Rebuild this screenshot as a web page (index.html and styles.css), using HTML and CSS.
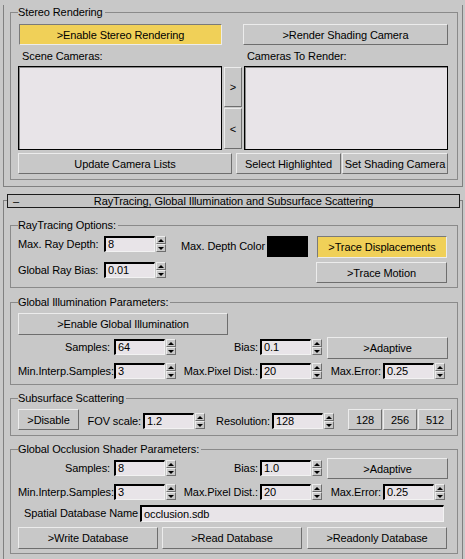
FILE: index.html
```html
<!DOCTYPE html>
<html lang="en">
<head>
    <meta charset="UTF-8">
    <meta name="viewport" content="width=device-width, initial-scale=1.0">
    <title>Renderer Settings</title>
    <link rel="stylesheet" href="styles.css">
</head>
<body>

    <div class="rollout rollout-first">
        <fieldset class="group stereo">
            <legend>Stereo Rendering</legend>
            <div class="row stereo-top">
                <button class="btn btn-on btn-stereo">&gt;Enable Stereo Rendering</button>
                <button class="btn btn-shading">&gt;Render Shading Camera</button>
            </div>
            <div class="row list-labels">
                <span class="list-label first">Scene Cameras:</span>
                <span class="list-label">Cameras To Render:</span>
            </div>
            <div class="row lists">
                <div class="listbox"></div>
                <div class="move-btns">
                    <button class="btn btn-add">&gt;</button>
                    <button class="btn btn-remove">&lt;</button>
                </div>
                <div class="listbox"></div>
            </div>
            <div class="row stereo-bottom">
                <button class="btn btn-update">Update Camera Lists</button>
                <button class="btn btn-select">Select Highlighted</button>
                <button class="btn btn-set">Set Shading Camera</button>
            </div>
        </fieldset>
    </div>

    <div class="rollout rollout-second">
        <div class="rollout-title">
            <span class="toggle">–</span>
            <span class="title-text">RayTracing, Global Illumination and Subsurface Scattering</span>
            <span></span>
        </div>

        <fieldset class="group raytrace">
            <legend>RayTracing Options:</legend>
            <div class="row rt-row1">
                <span class="lbl rt-lbl">Max. Ray Depth:</span>
                <span class="spinner"><span class="field">8</span><span class="arrows"><span class="arrow up"></span><span class="arrow down"></span></span></span>
                <span class="depth-lbl">Max. Depth Color</span>
                <span class="swatch"></span>
                <button class="btn btn-on btn-displace">&gt;Trace Displacements</button>
            </div>
            <div class="row rt-row2">
                <span class="lbl rt-lbl">Global Ray Bias:</span>
                <span class="spinner"><span class="field">0.01</span><span class="arrows"><span class="arrow up"></span><span class="arrow down"></span></span></span>
                <button class="btn btn-motion">&gt;Trace Motion</button>
            </div>
        </fieldset>

        <fieldset class="group gi">
            <legend>Global Illumination Parameters:</legend>
            <button class="btn btn-gi">&gt;Enable Global Illumination</button>
            <div class="row param-row1">
                <span class="lbl col1">Samples:</span>
                <span class="spinner"><span class="field">64</span><span class="arrows"><span class="arrow up"></span><span class="arrow down"></span></span></span>
                <span class="lbl col2">Bias:</span>
                <span class="spinner"><span class="field">0.1</span><span class="arrows"><span class="arrow up"></span><span class="arrow down"></span></span></span>
                <button class="btn btn-adaptive">&gt;Adaptive</button>
            </div>
            <div class="row param-row2">
                <span class="lbl col1">Min.Interp.Samples:</span>
                <span class="spinner"><span class="field">3</span><span class="arrows"><span class="arrow up"></span><span class="arrow down"></span></span></span>
                <span class="lbl col2">Max.Pixel Dist.:</span>
                <span class="spinner"><span class="field">20</span><span class="arrows"><span class="arrow up"></span><span class="arrow down"></span></span></span>
                <span class="lbl col3">Max.Error:</span>
                <span class="spinner"><span class="field">0.25</span><span class="arrows"><span class="arrow up"></span><span class="arrow down"></span></span></span>
            </div>
        </fieldset>

        <fieldset class="group sss">
            <legend>Subsurface Scattering</legend>
            <div class="row sss-row">
                <button class="btn btn-disable">&gt;Disable</button>
                <span class="lbl fov-lbl">FOV scale:</span>
                <span class="spinner"><span class="field">1.2</span><span class="arrows"><span class="arrow up"></span><span class="arrow down"></span></span></span>
                <span class="lbl res-lbl">Resolution:</span>
                <span class="spinner"><span class="field">128</span><span class="arrows"><span class="arrow up"></span><span class="arrow down"></span></span></span>
                <div class="res-btns">
                    <button class="btn btn-res">128</button>
                    <button class="btn btn-res">256</button>
                    <button class="btn btn-res">512</button>
                </div>
            </div>
        </fieldset>

        <fieldset class="group occlusion">
            <legend>Global Occlusion Shader Parameters:</legend>
            <div class="row param-row1">
                <span class="lbl col1">Samples:</span>
                <span class="spinner"><span class="field">8</span><span class="arrows"><span class="arrow up"></span><span class="arrow down"></span></span></span>
                <span class="lbl col2">Bias:</span>
                <span class="spinner"><span class="field">1.0</span><span class="arrows"><span class="arrow up"></span><span class="arrow down"></span></span></span>
                <button class="btn btn-adaptive">&gt;Adaptive</button>
            </div>
            <div class="row param-row2">
                <span class="lbl col1">Min.Interp.Samples:</span>
                <span class="spinner"><span class="field">3</span><span class="arrows"><span class="arrow up"></span><span class="arrow down"></span></span></span>
                <span class="lbl col2">Max.Pixel Dist.:</span>
                <span class="spinner"><span class="field">20</span><span class="arrows"><span class="arrow up"></span><span class="arrow down"></span></span></span>
                <span class="lbl col3">Max.Error:</span>
                <span class="spinner"><span class="field">0.25</span><span class="arrows"><span class="arrow up"></span><span class="arrow down"></span></span></span>
            </div>
            <div class="row db-row">
                <span class="lbl db-lbl">Spatial Database Name</span>
                <span class="field db-field">occlusion.sdb</span>
            </div>
            <div class="row db-btns">
                <button class="btn btn-db">&gt;Write Database</button>
                <button class="btn btn-db">&gt;Read Database</button>
                <button class="btn btn-db">&gt;Readonly Database</button>
            </div>
        </fieldset>
    </div>

</body>
</html>
```

FILE: styles.css
```css
body {
    margin: 0;
    width: 465px;
    overflow: hidden;
    background-color: #c8c8c8;
    font-family: "Liberation Sans", Arial, sans-serif;
    font-size: 11px;
    letter-spacing: -0.1px;
    color: #000;
}

/* rollout frames */
.rollout {
    margin: 0 2px 0 3px;
    border: 1px solid #808080;
    border-top: none;
}

.rollout-second {
    margin-top: 13px;
    border-top: 1px solid #808080;
    border-bottom: none;
    padding-bottom: 20px;
}

.rollout-title {
    display: grid;
    grid-template-columns: 20px 1fr 20px;
    height: 14px;
    margin: -7px 2px 0 3px;
    box-sizing: border-box;
    border: 1px solid #1c1c1c;
    background-color: #c4c4c4;
    line-height: 12px;
}

.toggle {
    padding-left: 5px;
}

.title-text {
    text-align: center;
    white-space: nowrap;
}

/* group boxes */
.group {
    min-width: 0;
    margin: 0 4px 0 6px;
    padding: 0 8px 0 7px;
    border: 1px solid #8a8a8a;
}

.group legend {
    height: 14px;
    padding: 0 2px 0 0;
    line-height: 14px;
    white-space: nowrap;
}

.stereo {
    margin-top: 5px;
    margin-bottom: 6px;
    padding-bottom: 5px;
}

.raytrace {
    margin-top: 10px;
    padding-bottom: 4px;
}

.gi {
    margin-top: 7px;
    padding-bottom: 5px;
}

.sss {
    margin-top: 6px;
    padding-bottom: 5px;
}

.occlusion {
    margin-top: 6px;
    padding-bottom: 4px;
}

.row {
    display: flex;
    align-items: flex-start;
}

/* buttons */
.btn {
    flex: none;
    box-sizing: border-box;
    height: 21px;
    padding: 0;
    font: inherit;
    letter-spacing: inherit;
    color: #000;
    background-color: #c8c8c8;
    border: 1px solid;
    border-color: #ececec #6e6e6e #6e6e6e #ececec;
    text-align: center;
    white-space: nowrap;
    cursor: pointer;
}

.btn-on {
    background-color: #f0d058;
    border-color: #7a7a7a #ececec #ececec #7a7a7a;
}

/* text fields and spinners */
.field {
    display: block;
    flex: none;
    width: 51px;
    height: 16px;
    box-sizing: border-box;
    padding-left: 2px;
    background-color: #e8e4e8;
    border-style: solid;
    border-width: 2px 1px 1px 2px;
    border-color: #000 #f2f2f2 #f2f2f2 #000;
    line-height: 13px;
    white-space: nowrap;
    overflow: hidden;
}

.spinner {
    display: flex;
    flex: none;
}

.arrows {
    display: flex;
    flex-direction: column;
    width: 10px;
    height: 16px;
    margin-left: 1px;
}

.arrow {
    display: flex;
    align-items: center;
    justify-content: center;
    height: 8px;
    box-sizing: border-box;
    border: 1px solid;
    border-color: #ececec #6e6e6e #6e6e6e #ececec;
}

.arrow.up::after {
    content: "";
    border-left: 3px solid transparent;
    border-right: 3px solid transparent;
    border-bottom: 3px solid #000;
}

.arrow.down::after {
    content: "";
    border-left: 3px solid transparent;
    border-right: 3px solid transparent;
    border-top: 3px solid #000;
}

.lbl {
    flex: none;
    height: 16px;
    box-sizing: border-box;
    line-height: 16px;
    text-align: right;
    white-space: nowrap;
}

/* stereo rendering */
.stereo-top {
    margin-top: 5px;
}

.btn-stereo {
    width: 203px;
    margin-left: 1px;
}

.btn-shading {
    width: 205px;
    margin-left: 21px;
}

.list-labels {
    height: 21px;
    line-height: 22px;
}

.list-label {
    padding-left: 3px;
    white-space: nowrap;
}

.list-label.first {
    width: 226px;
    box-sizing: border-box;
    padding-left: 4px;
}

.listbox {
    flex: none;
    width: 204px;
    height: 84px;
    box-sizing: border-box;
    background-color: #e8e4e8;
    border: 1px solid #000;
    box-shadow: inset 1px 1px 0 #8a8a8a;
}

.move-btns {
    display: flex;
    flex-direction: column;
    width: 18px;
    margin: 0 2px;
}

.btn-add {
    height: 40px;
    margin-top: 1px;
}

.btn-remove {
    height: 41px;
    margin-top: 1px;
}

.stereo-bottom {
    margin-top: 3px;
}

.btn-update {
    width: 214px;
}

.btn-select {
    width: 105px;
    margin-left: 4px;
}

.btn-set {
    width: 106px;
    margin-left: 1px;
}

/* raytracing options */
.rt-row1 {
    margin-top: 4px;
    height: 22px;
}

.rt-row2 {
    margin-top: 4px;
    height: 21px;
}

.rt-lbl {
    width: 86px;
    padding-right: 6px;
}

.depth-lbl {
    flex: none;
    width: 86px;
    margin-left: 15px;
    line-height: 21px;
    white-space: nowrap;
}

.swatch {
    flex: none;
    width: 41px;
    height: 21px;
    background-color: #000;
}

.btn-displace {
    width: 130px;
    height: 22px;
    margin-left: 9px;
}

.btn-motion {
    width: 131px;
    margin-left: 150px;
}

/* parameter rows, shared by GI and occlusion */
.btn-gi {
    display: block;
    width: 210px;
    height: 22px;
    margin-top: 4px;
}

.param-row1 {
    height: 22px;
    margin-top: 2px;
}

.param-row1 .lbl,
.param-row1 .spinner {
    margin-top: 2px;
}

.param-row2 {
    height: 16px;
    margin-top: 4px;
}

.col1 {
    width: 92px;
    margin-right: 4px;
}

.col2 {
    width: 82px;
    margin-right: 2px;
}

.col3 {
    width: 59px;
    margin-right: 2px;
}

.btn-adaptive {
    width: 121px;
    height: 22px;
    margin-left: 5px;
}

.occlusion .param-row1 {
    height: 21px;
}

.occlusion .btn-adaptive {
    height: 21px;
    margin-top: 0;
}

.occlusion .param-row2 {
    margin-top: 5px;
}

/* subsurface scattering */
.sss-row {
    margin-top: 4px;
    height: 21px;
}

.sss-row .lbl,
.sss-row .spinner {
    margin-top: 4px;
}

.btn-disable {
    width: 61px;
}

.fov-lbl {
    width: 62px;
    margin-right: 2px;
}

.res-lbl {
    width: 65px;
    margin-right: 2px;
}

.res-btns {
    display: flex;
    gap: 1px;
    margin-left: 14px;
}

.btn-res {
    width: 34px;
}

/* spatial database */
.db-row {
    margin-top: 5px;
}

.db-lbl {
    width: 122px;
    height: 17px;
    padding-left: 6px;
    line-height: 17px;
    text-align: left;
}

.db-field {
    width: 304px;
    height: 17px;
    line-height: 14px;
}

.db-btns {
    margin-top: 5px;
    gap: 4px;
}

.btn-db {
    width: 140px;
    height: 22px;
}

.btn-db:last-child {
    margin-left: 1px;
}
```
